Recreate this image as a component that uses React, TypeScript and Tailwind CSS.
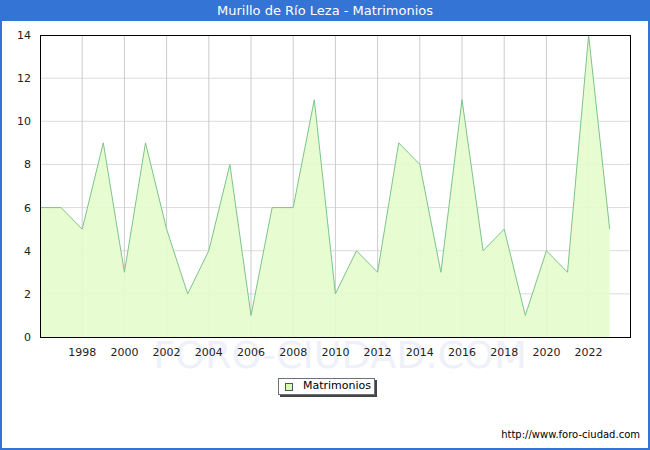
import React from "react";

const data = [6,6,5,9,3,9,5,2,4,8,1,6,6,11,2,4,3,9,8,3,11,4,5,1,4,3,14,5];
const X = (i: number) => 40 + i * 21.1;
const Y = (v: number) => 337 - v * 21.57;

export default function App() {
  const pts = data.map((v, i) => `${X(i)},${Y(v)}`).join(" ");
  const area = `${X(0)},337 ${pts} ${X(data.length - 1)},337`;
  const font = { fontFamily: '"DejaVu Sans", sans-serif' };
  return (
    <div className="w-[650px] h-[450px] flex flex-col bg-white border-x-2 border-b-2 border-[#3474d4]" style={font}>
      <div className="h-[21px] bg-[#3474d4] text-white text-[13px] flex items-center justify-center shrink-0">
        Murillo de Río Leza - Matrimonios
      </div>
      <div className="relative flex-1">
        <svg width="646" height="427" className="absolute left-[-2px] top-[-21px]" viewBox="0 0 646 427" style={{ left: -2, top: -21 }}>
          <text x="340" y="368" textAnchor="middle" fontSize="38" fill="#eef0fa" style={font}>FORO-CIUDAD.COM</text>
          {[2,4,6,8,10,12].map(v => <line key={v} x1="40" x2="630" y1={Y(v)} y2={Y(v)} stroke="#dcdcdc" />)}
          {Array.from({ length: 13 }, (_, k) => 1998 + 2 * k).map(yr => (
            <line key={yr} x1={X(yr - 1996)} x2={X(yr - 1996)} y1="35" y2="337" stroke="#cccccc" />
          ))}
          <polygon points={area} fill="#e5fccc" fillOpacity="0.9" />
          <polyline points={pts} fill="none" stroke="#7cc48a" strokeWidth="1" />
          <rect x="40.5" y="35.5" width="590" height="302" fill="none" stroke="#000" />
          {[0,2,4,6,8,10,12,14].map(v => (
            <text key={v} x="31" y={Y(v) + 4} textAnchor="end" fontSize="11" fill="#222" style={font}>{v}</text>
          ))}
          {Array.from({ length: 13 }, (_, k) => 1998 + 2 * k).map(yr => (
            <text key={yr} x={X(yr - 1996)} y="356" textAnchor="middle" fontSize="11" fill="#222" style={font}>{yr}</text>
          ))}
        </svg>
        <div className="absolute left-[276px] top-[357px] w-[97px] h-[17px] bg-white border border-gray-500 shadow-[2px_2px_0_#444] flex items-center text-[11px] text-black">
          <span className="ml-[6px] w-[8px] h-[8px] bg-[#d8fcb0] border border-gray-600" />
          <span className="ml-[10px]">Matrimonios</span>
        </div>
        <div className="absolute right-[8px] top-[406px] text-[10px] text-black">http://www.foro-ciudad.com</div>
      </div>
    </div>
  );
}
